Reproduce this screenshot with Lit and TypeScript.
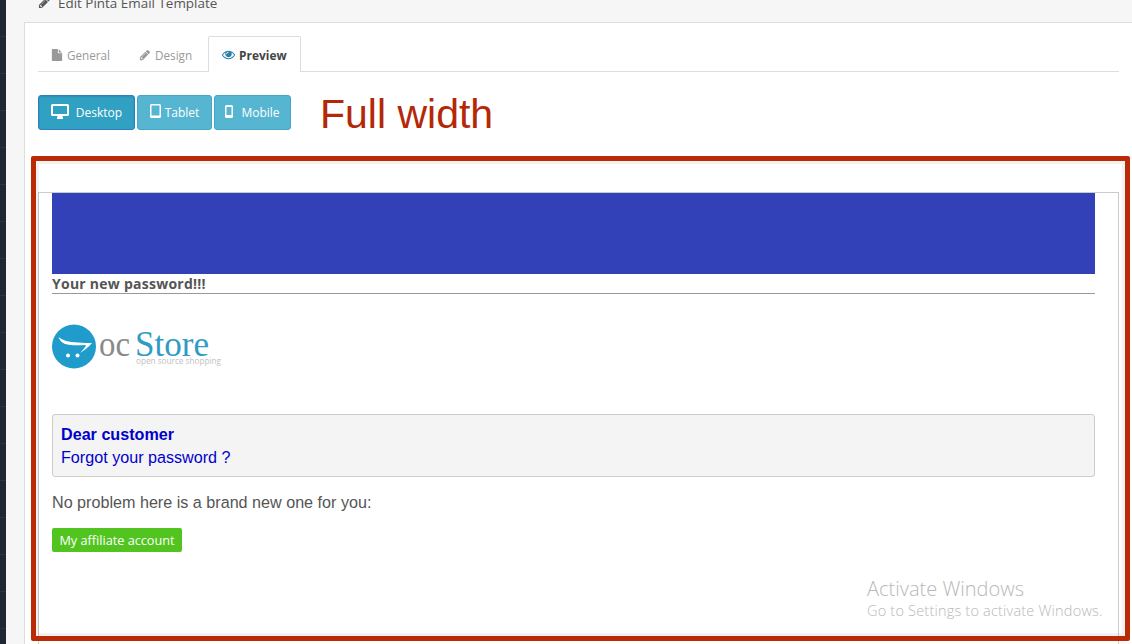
import { LitElement, html, css, svg } from "lit";
import { customElement } from "lit/decorators.js";

const FILE = svg`<path d="M1152 512v-472q22 14 36 28l408 408q14 14 28 36h-472zm-128 32q0 40 28 68t68 28h544v1056q0 40-28 68t-68 28h-1344q-40 0-68-28t-28-68v-1600q0-40 28-68t68-28h800v544z"/>`;
const PENCIL = svg`<path d="M491 1536l91-91-235-235-91 91v107h128v128h107zm523-928q0-22-22-22-10 0-17 7l-542 542q-7 7-7 17 0 22 22 22 10 0 17-7l542-542q7-7 7-17zm-54-192l416 416-832 832h-416v-416zm683 96q0 53-37 90l-166 166-416-416 166-165q36-38 90-38 53 0 91 38l235 234q37 39 37 91z"/>`;
const EYE = svg`<path d="M1664 960q-152-236-381-353 61 104 61 225 0 185-131.5 316.5t-316.5 131.5-316.5-131.5-131.5-316.5q0-121 61-225-229 117-381 353 133 205 333.5 326.5t434.5 121.5 434.5-121.5 333.5-326.5zm-720-384q0-20-14-34t-34-14q-125 0-214.5 89.5t-89.5 214.5q0 20 14 34t34 14 34-14 14-34q0-86 61-147t147-61q20 0 34-14t14-34zm848 384q0 34-20 69-140 230-376.5 368.5t-499.5 138.5-499.5-139-376.5-368q-20-35-20-69t20-69q140-229 376.5-368t499.5-139 499.5 139 376.5 368q20 35 20 69z"/>`;

@customElement("app-root")
export class AppRoot extends LitElement {
  static styles = css`
    :host {
      display: flex;
      position: relative;
      width: 1132px;
      height: 644px;
      overflow: hidden;
      background: #f6f6f6;
      font-family: "Open Sans", "Liberation Sans", sans-serif;
      font-size: 12px;
      color: #555;
    }
    svg { display: block; fill: currentColor; flex: none; }
    .side {
      width: 6px;
      flex: none;
      background: repeating-linear-gradient(to bottom, #1f2733 0, #1f2733 36px, #2b3441 36px, #2b3441 37px);
    }
    .main { flex: 1; min-width: 0; padding-left: 18px; display: flex; flex-direction: column; }
    .head {
      height: 22px;
      flex: none;
      display: flex;
      align-items: flex-end;
      overflow: hidden;
      padding-left: 14px;
      gap: 7px;
      color: #555;
      font-size: 13.45px;
    }
    .head span { line-height: 18px; margin-bottom: 10px; white-space: nowrap; }
    .head svg { margin-bottom: 13px; }
    .panel {
      flex: 1;
      background: #fff;
      border-top: 1px solid #ddd;
      border-left: 1px solid #ddd;
      padding: 13px 13px 0 13px;
      display: flex;
      flex-direction: column;
      min-height: 0;
    }
    .tabs { display: flex; height: 36px; border-bottom: 1px solid #ddd; flex: none; box-sizing: border-box; }
    .tab {
      display: flex;
      align-items: center;
      gap: 4px;
      padding: 0 14px 0 12px;
      margin-right: 1px;
      color: #999;
      height: 36px;
      box-sizing: border-box;
      border: 1px solid transparent;
      border-bottom: 0;
      white-space: nowrap;
      font-size: 11.7px;
    }
    .tab.on {
      background: #fff;
      border-color: #ddd;
      border-radius: 2px 2px 0 0;
      color: #444;
      font-weight: 700;
      font-size: 11.9px;
      margin-right: 0;
      padding-left: 13px;
      padding-right: 13px;
      gap: 4px;
    }
    .tab.on svg { color: #2a7fa8; width: 13px; }
    .tools { display: flex; align-items: center; gap: 2px; margin-top: 23px; height: 35px; flex: none; }
    .btn {
      height: 35px;
      box-sizing: border-box;
      background: #56b6d2;
      border: 1px solid #44a7c6;
      border-radius: 3px;
      color: #fff;
      display: flex;
      align-items: center;
      justify-content: center;
      font-size: 12px;
      white-space: nowrap;
    }
    .btn svg { margin-bottom: 3px; }
    .btn.on {
      background: #31a1c3;
      border-color: #2f7fc0;
      width: 97px;
      gap: 7px;
      box-shadow: inset 0 1px 2px rgba(0,0,0,.12);
    }
    .btn.t { width: 75px; gap: 4px; }
    .btn.m { width: 77px; gap: 8px; }
    .full {
      font-family: "Liberation Sans", Arial, sans-serif;
      font-size: 41px;
      line-height: 40px;
      color: #b42807;
      margin-left: 27px;
      margin-top: 2px;
      white-space: nowrap;
    }
    .frame {
      flex: 1;
      margin-top: 62px;
      border: 1px solid #ccc;
      border-bottom: 0;
      padding: 0 23px 0 13px;
      background: #fff;
      min-height: 0;
    }
    .band { height: 81px; background: #3341b8; }
    .subject {
      font-weight: 700;
      font-size: 14px;
      line-height: 19px;
      letter-spacing: .25px;
      color: #555;
      border-bottom: 1px solid #999;
    }
    .logo { margin-top: 30px; height: 45px; }
    .logo svg { overflow: visible; }
    .logo text { font-family: "Liberation Serif", serif; }
    .logo .tag { font-family: "Open Sans", sans-serif; }
    .box {
      margin-top: 45px;
      height: 63px;
      box-sizing: border-box;
      background: #f4f4f4;
      border: 1px solid #ccc;
      border-radius: 3px;
      padding: 8px 8px;
      font-family: "Liberation Sans", Arial, sans-serif;
      font-size: 16.15px;
      line-height: 23px;
      color: #0000cc;
    }
    .box b { display: block; }
    .msg {
      font-family: "Liberation Sans", Arial, sans-serif;
      font-size: 16.15px;
      line-height: 20px;
      color: #555;
      margin-top: 15px;
    }
    .go {
      display: inline-flex;
      align-items: center;
      justify-content: center;
      width: 130px;
      height: 24px;
      margin-top: 16px;
      background: #52c41f;
      border-radius: 2px;
      color: #fff;
      font-size: 12.7px;
    }
    .red {
      position: absolute;
      left: 31px;
      top: 156px;
      width: 1099px;
      height: 485px;
      box-sizing: border-box;
      border: 5px solid #b92a05;
      border-radius: 2px;
      box-shadow: inset 0 0 0 3px rgba(0,0,0,.05);
    }
    .win {
      position: absolute;
      left: 867px;
      top: 576px;
      font-family: "Open Sans", sans-serif;
      font-weight: 300;
      color: #b8b8b8;
      white-space: nowrap;
    }
    .win div:first-child { font-size: 20px; line-height: 25px; }
    .win div:last-child { font-size: 14.5px; line-height: 20px; letter-spacing: .2px; }
  `;

  render() {
    return html`
      <div class="side"></div>
      <div class="main">
        <div class="head">
          <svg width="13" height="13" viewBox="0 0 1792 1792">${PENCIL}</svg>
          <span>Edit Pinta Email Template</span>
        </div>
        <div class="panel">
          <div class="tabs">
            <div class="tab"><svg width="12" height="12" viewBox="0 0 1792 1792">${FILE}</svg>General</div>
            <div class="tab"><svg width="12" height="12" viewBox="0 0 1792 1792">${PENCIL}</svg>Design</div>
            <div class="tab on"><svg width="13" height="13" viewBox="0 0 1792 1792">${EYE}</svg>Preview</div>
          </div>
          <div class="tools">
            <div class="btn on">
              <svg width="18" height="15" viewBox="0 0 18 15"><path fill-rule="evenodd" d="M1.500 0h15A1.500 1.500 0 0 1 18 1.500v9a1.500 1.500 0 0 1-1.500 1.500H11.500q0 1 .5 2v1H6v-1q.5-1 .5-2H1.500A1.500 1.500 0 0 1 0 10.500v-9A1.500 1.500 0 0 1 1.500 0zM2 2v8h14V2z"/></svg>
              Desktop
            </div>
            <div class="btn t">
              <svg width="11" height="14" viewBox="0 0 11 14"><path fill-rule="evenodd" d="M1.500 0h8A1.500 1.500 0 0 1 11 1.500v11A1.500 1.500 0 0 1 9.500 14h-8A1.500 1.500 0 0 1 0 12.500v-11A1.500 1.500 0 0 1 1.500 0zM1.500 1.500v10h8v-10z"/></svg>
              Tablet
            </div>
            <div class="btn m">
              <svg width="8" height="13" viewBox="0 0 8 13"><path fill-rule="evenodd" d="M1.500 0h5A1.500 1.500 0 0 1 8 1.500v10A1.500 1.500 0 0 1 6.500 13h-5A1.500 1.500 0 0 1 0 11.500v-10A1.500 1.500 0 0 1 1.500 0zM1.500 2v8h5V2z"/></svg>
              Mobile
            </div>
            <div class="full">Full width</div>
          </div>
          <div class="frame">
            <div class="band"></div>
            <div class="subject">Your new password!!!</div>
            <div class="logo">
              <svg width="170" height="45" viewBox="0 0 170 45">
                <circle cx="22" cy="22.500" r="22" fill="#1f9ccb"></circle>
                <path d="M6.500 13Q12 18 26 18.500Q34 19 40 19Q36 24 28 29Q33 24 34 21Q20 22 13 20Q8 18 6.500 13z" fill="#fff"></path>
                <circle cx="16" cy="31.500" r="2" fill="#fff"></circle>
                <circle cx="25.500" cy="31.500" r="2" fill="#fff"></circle>
                <text x="47" y="32" font-size="35" fill="#8a8a8a" textLength="31" lengthAdjust="spacingAndGlyphs">oc</text>
                <text x="83" y="32" font-size="35" fill="#2f9cc4" textLength="74" lengthAdjust="spacingAndGlyphs">Store</text>
                <text class="tag" x="84" y="40" font-size="9" fill="#bfbfbf" textLength="85" lengthAdjust="spacingAndGlyphs">open source shopping</text>
              </svg>
            </div>
            <div class="box"><b>Dear customer</b>Forgot your password ?</div>
            <div class="msg">No problem here is a brand new one for you:</div>
            <div class="go">My affiliate account</div>
          </div>
        </div>
      </div>
      <div class="red"></div>
      <div class="win"><div>Activate Windows</div><div>Go to Settings to activate Windows.</div></div>
    `;
  }
}
